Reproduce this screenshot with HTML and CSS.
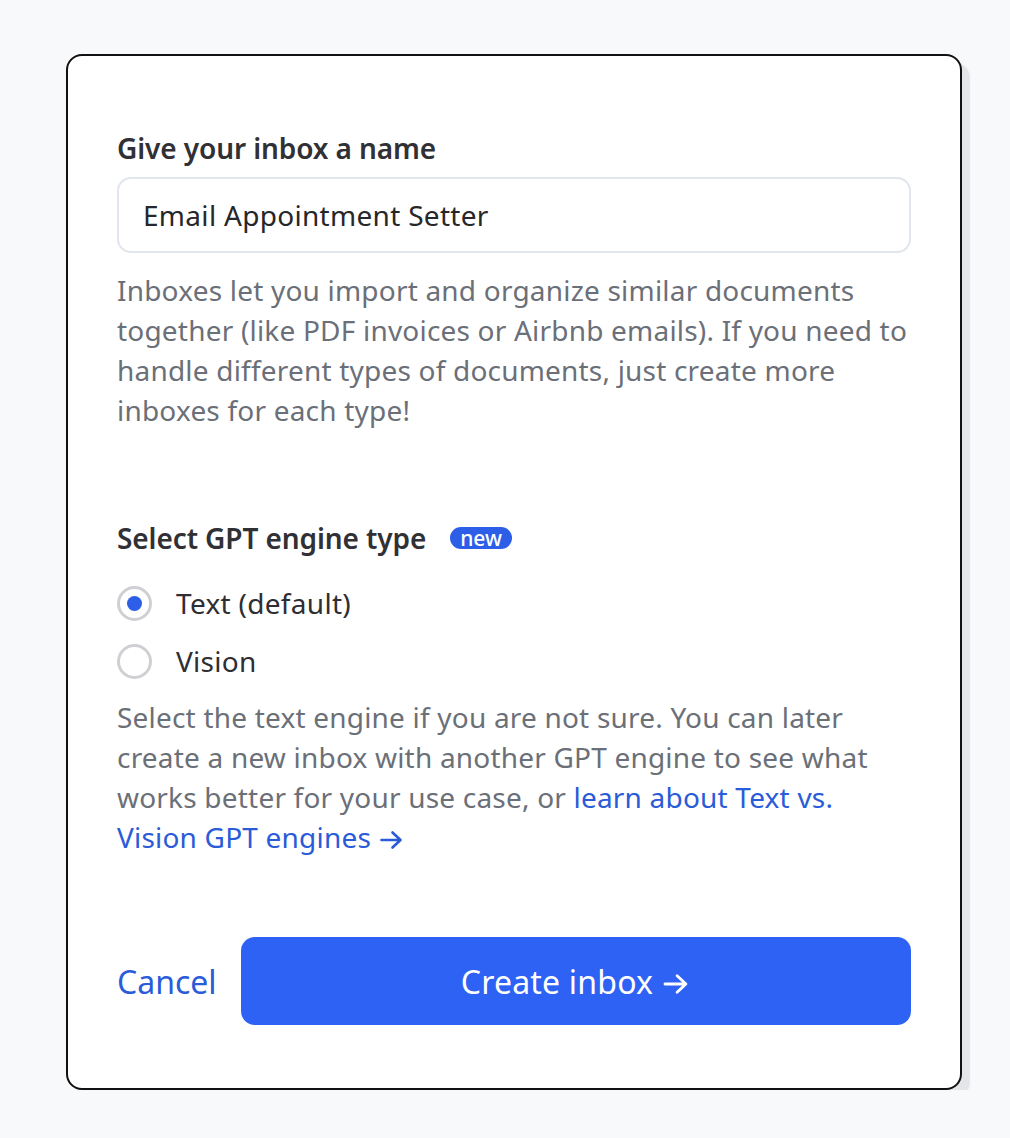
FILE: index.html
```html
<!DOCTYPE html>
<html>
<head>
<meta charset="utf-8">
<link rel="stylesheet" href="styles.css">
</head>
<body>
<div class="card">
  <label class="heading">Give your inbox a name</label>
  <div class="input">Email Appointment Setter</div>
  <p class="help">Inboxes let you import and organize similar documents together (like PDF invoices or Airbnb emails). If you need to handle different types of documents, just create more inboxes for each type!</p>

  <div class="heading engine">Select GPT engine type <span class="badge">new</span></div>
  <div class="radios">
    <div class="radio-row"><span class="radio checked"></span><span>Text (default)</span></div>
    <div class="radio-row"><span class="radio"></span><span>Vision</span></div>
  </div>
  <p class="help help2">Select the text engine if you are not sure. You can later create a new inbox with another GPT engine to see what works better for your use case, or <a class="link">learn about Text vs. Vision GPT engines<svg class="arrow" viewBox="0 0 24 20" width="29" height="20"><path d="M2 10H21M13 2.5L21 10L13 17.5" fill="none" stroke="currentColor" stroke-width="2.6" stroke-linecap="round" stroke-linejoin="round"/></svg></a></p>

  <div class="actions">
    <a class="cancel">Cancel</a>
    <button class="primary">Create inbox<svg class="arrow big" viewBox="0 0 24 20" width="30" height="22"><path d="M2 10H21M13 2.5L21 10L13 17.5" fill="none" stroke="currentColor" stroke-width="2.6" stroke-linecap="round" stroke-linejoin="round"/></svg></button>
  </div>
</div>
</body>
</html>
```
FILE: styles.css
```css
html, body { margin: 0; padding: 0; }
body {
  background: #f8f9fb;
  font-family: "Noto Sans", "Open Sans", sans-serif;
  padding: 54px 0 0 66px;
}
.card {
  box-sizing: border-box;
  width: 896px;
  height: 1036px;
  background: #fff;
  border: 2px solid #111;
  border-radius: 16px;
  box-shadow: 8px 8px 1px #e4e5e8;
  padding: 74px 49px 0 49px;
  display: flex;
  flex-direction: column;
}
.heading {
  display: block;
  font-size: 28px;
  line-height: 36px;
  font-weight: 600;
  color: #303035;
  letter-spacing: -0.1px;
}
.input {
  margin-top: 11px;
  height: 76px;
  box-sizing: border-box;
  border: 2px solid #e1e6ec;
  border-radius: 14px;
  padding: 0 24px;
  display: flex;
  align-items: center;
  font-size: 28px;
  letter-spacing: 0.3px;
  color: #27272a;
}
.help {
  margin: 17px 0 0 0;
  font-size: 28px;
  line-height: 40px;
  color: #6b6f78;
  letter-spacing: 0.2px;
}
.engine {
  margin-top: 90px;
  display: flex;
  align-items: center;
}
.badge {
  margin-left: 24px;
  background: #2c5ee8;
  color: #fff;
  font-size: 21px;
  font-weight: 500;
  line-height: 22px;
  height: 22px;
  padding: 0 10px;
  border-radius: 11px;
  display: inline-flex;
  align-items: center;
  letter-spacing: 0;
}
.radios {
  margin-top: 28px;
  display: flex;
  flex-direction: column;
  gap: 20px;
}
.radio-row {
  display: flex;
  align-items: center;
  gap: 24px;
  font-size: 28px;
  line-height: 38px;
  color: #2e2e33;
  letter-spacing: 0.3px;
}
.radio {
  width: 35px;
  height: 35px;
  box-sizing: border-box;
  border: 3px solid #cfd0d3;
  border-radius: 50%;
  display: flex;
  align-items: center;
  justify-content: center;
}
.radio.checked::after {
  content: "";
  width: 15px;
  height: 15px;
  border-radius: 50%;
  background: #2c5ee8;
}
.help2 { margin-top: 17px; }
.link { color: #2a5bd8; }
.arrow { vertical-align: -2px; margin-left: 6px; }
.arrow.big { margin-left: 8px; vertical-align: -1px; }
.actions {
  margin-top: 80px;
  display: flex;
  align-items: center;
}
.cancel {
  font-size: 32px;
  color: #2a5bd8;
  width: 124px;
}
.primary {
  flex: 1;
  height: 88px;
  border: none;
  border-radius: 14px;
  background: #2e62f4;
  color: #fff;
  font-family: "Noto Sans", "Open Sans", sans-serif;
  font-size: 32px;
  letter-spacing: 0.2px;
}
```
